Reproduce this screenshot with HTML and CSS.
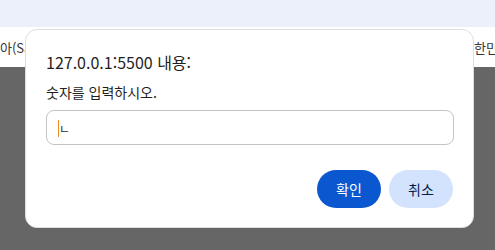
FILE: index.html
```html
<!DOCTYPE html>
<html lang="ko">
<head>
<meta charset="utf-8">
<link rel="stylesheet" href="styles.css">
</head>
<body>
<div class="topbar"></div>
<div class="band">
  <span class="band-left">아(Sans)</span>
  <span class="band-gap"></span>
  <span class="band-right">한민국</span>
</div>
<div class="backdrop"></div>
<div class="dialog">
  <div class="title">127.0.0.1:5500 내용:</div>
  <div class="message">숫자를 입력하시오.</div>
  <div class="input"><span class="value">ㄴ</span></div>
  <div class="actions">
    <button class="btn btn-primary">확인</button>
    <button class="btn btn-secondary">취소</button>
  </div>
</div>
</body>
</html>
```
FILE: styles.css
```css
html, body {
  margin: 0;
  height: 100%;
  overflow: hidden;
}
body {
  font-family: "Noto Sans CJK KR", "Noto Sans", sans-serif;
  background: #666666;
  display: flex;
  flex-direction: column;
  position: relative;
}
.topbar {
  height: 27px;
  background: #ebf0fa;
  flex: none;
}
.band {
  height: 40px;
  background: #ffffff;
  flex: none;
  display: grid;
  grid-template-columns: 25px 1fr 21px;
  align-items: center;
  overflow: hidden;
  white-space: nowrap;
  font-size: 13px;
  color: #333;
}
.band-left,
.band-right {
  overflow: hidden;
}
.backdrop {
  flex: 1;
  background: #666666;
}
.dialog {
  position: absolute;
  left: 25px;
  top: 29px;
  width: 449px;
  height: 199px;
  box-sizing: border-box;
  background: #fff;
  border: 1px solid #dedede;
  border-radius: 12px;
  padding: 20px 20px 19px 20px;
  display: flex;
  flex-direction: column;
  color: #1f1f1f;
}
.title {
  font-size: 16px;
  line-height: 24px;
}
.message {
  font-size: 14px;
  line-height: 20px;
  margin-top: 8px;
}
.input {
  margin-top: 8px;
  height: 35px;
  box-sizing: border-box;
  width: 408px;
  border: 1px solid #c4c4c4;
  border-radius: 8px;
  padding: 2px 11px 0;
  display: flex;
  align-items: center;
  font-size: 12px;
}
.value {
  border-left: 1px solid #f08a24;
  padding-left: 0;
  margin-left: 0;
}
.actions {
  margin-top: auto;
  display: flex;
  justify-content: flex-end;
  gap: 8px;
}
.btn {
  width: 64px;
  height: 38px;
  border: none;
  border-radius: 19px;
  font-family: inherit;
  font-size: 14px;
  padding: 0;
}
.btn-primary {
  background: #0b57d0;
  color: #fff;
}
.btn-secondary {
  background: #d3e3fd;
  color: #041e49;
}
```
